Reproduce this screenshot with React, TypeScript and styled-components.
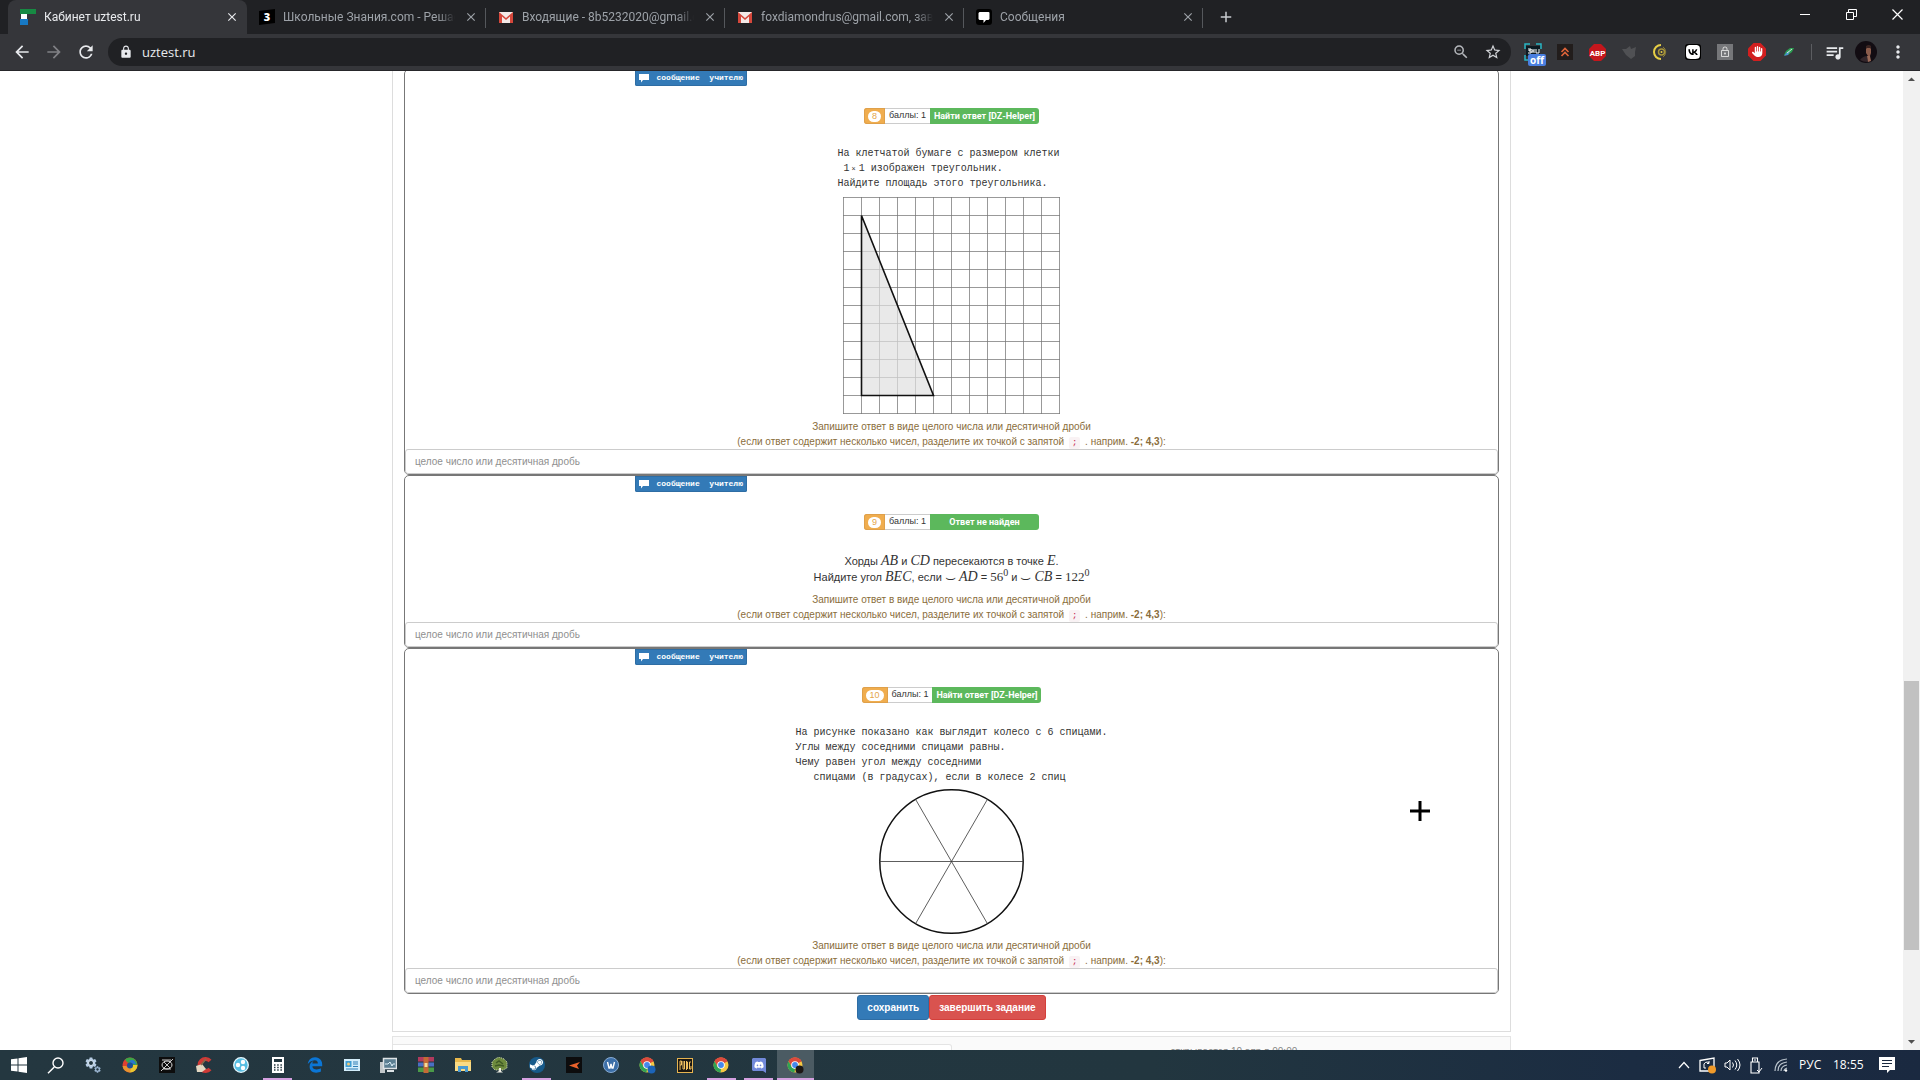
import React from "react";
import styled, { createGlobalStyle } from "styled-components";
import {
  MdArrowBack,
  MdArrowForward,
  MdRefresh,
  MdLock,
  MdStarBorder,
  MdZoomOut,
  MdQueueMusic,
  MdMoreVert,
  MdClose,
  MdAdd,
  MdArrowDropUp,
  MdArrowDropDown,
  MdSettings,
  MdLockOutline,
} from "react-icons/md";
import { FaVk, FaDiscord, FaSteamSymbol, FaEdgeLegacy, FaHand } from "react-icons/fa6";

const ui = `"Open Sans", "Noto Sans", sans-serif`;
const roboto = `Roboto, "Open Sans", sans-serif`;
const arial = `"Liberation Sans", Arial, sans-serif`;
const mono = `"Liberation Mono", "Courier New", monospace`;

const GlobalStyle = createGlobalStyle`
  *, *::before, *::after { box-sizing: border-box; }
  body { margin: 0; overflow: hidden; }
  button { border: 0; padding: 0; background: none; font: inherit; color: inherit; }
`;

/* ---------- window frame ---------- */

const Screen = styled.div`
  display: flex;
  flex-direction: column;
  height: 100vh;
  background: #fff;
  font-family: ${arial};
  font-size: 10px;
  color: #333;
`;

const TabStrip = styled.header`
  display: flex;
  flex: none;
  height: 34px;
  padding-left: 8px;
  background: #202124;
  font-family: ${roboto};
  font-size: 12px;
`;

const Tab = styled.div<{ $active?: boolean; $divided?: boolean }>`
  display: flex;
  align-items: center;
  gap: 8px;
  flex: 0 1 239px;
  min-width: 0;
  padding: 0 7px 0 12px;
  position: relative;
  color: ${(p) => (p.$active ? "#e8eaed" : "#9da2a8")};
  background: ${(p) => (p.$active ? "#35363a" : "transparent")};
  border-radius: 8px 8px 0 0;
  &::after {
    content: "";
    position: absolute;
    right: 0;
    top: 8px;
    width: 1px;
    height: 20px;
    background: ${(p) => (p.$divided ? "#55585c" : "transparent")};
  }
  svg {
    flex: none;
  }
`;

const TabTitle = styled.a`
  flex: 1;
  min-width: 0;
  overflow: hidden;
  white-space: nowrap;
  color: inherit;
  text-decoration: none;
  line-height: 16px;
  mask-image: linear-gradient(90deg, #000 90%, transparent);
`;

const IconButton = styled.button<{ $w: number; $color?: string }>`
  display: flex;
  align-items: center;
  justify-content: center;
  flex: none;
  width: ${(p) => p.$w}px;
  color: ${(p) => p.$color ?? "inherit"};
`;

const NewTab = styled(IconButton)`
  margin-left: 9px;
  color: #c8cbcf;
`;

const WindowControls = styled.div`
  display: flex;
  height: 28px;
  margin-left: auto;
  color: #fff;
`;

const Toolbar = styled.div`
  display: flex;
  align-items: center;
  flex: none;
  height: 37px;
  padding: 0 6px;
  background: #35363a;
  border-bottom: 1px solid #26262a;
  color: #e8eaed;
`;

const AddressBar = styled.div`
  display: flex;
  align-items: center;
  flex: 1;
  height: 28px;
  margin: 0 6px;
  padding: 0 2px 0 11px;
  border-radius: 14px;
  background: #202124;
  font-family: ${ui};
`;

const AddressInput = styled.input`
  flex: 1;
  min-width: 0;
  margin-left: 9px;
  padding: 0;
  border: 0;
  outline: 0;
  background: none;
  color: #e8eaed;
  font: 13px/20px ${ui};
`;

const Extensions = styled.div`
  display: flex;
  align-items: center;
`;

const Separator = styled.span`
  width: 1px;
  height: 16px;
  margin: 0 6px;
  background: #5c5d61;
`;

const OffIcon = styled.span`
  position: relative;
  width: 18px;
  height: 18px;
`;

const OffBadge = styled.span`
  position: absolute;
  left: 4px;
  top: 11px;
  padding: 0 2px;
  border-radius: 2px;
  background: #4a7fe0;
  color: #fff;
  font: bold 10px/12px ${ui};
`;

/* ---------- page ---------- */

const Viewport = styled.div`
  display: flex;
  flex: 1;
  min-height: 0;
  overflow: hidden;
  position: relative;
`;

const Page = styled.main`
  flex: 1;
  min-width: 0;
`;

const Panel = styled.section`
  max-width: 1119px;
  margin: -2px auto 4px;
  padding: 0 11px 11px;
  border: 1px solid #ddd;
  border-top: 0;
`;

const Card = styled.article`
  border: 1px solid #777;
  border-radius: 5px;
  text-align: center;
`;

const MessageButton = styled.button`
  display: flex;
  align-items: center;
  gap: 8px;
  height: 16px;
  margin-left: 21%;
  padding: 0 4px;
  border-radius: 0 0 2px 2px;
  background: #337ab7;
  box-shadow: inset 0 0 0 1px #2e6da4;
  color: #fff;
  font: bold 8px/16px ${mono};
  white-space: pre;
`;

const BadgeRow = styled.div`
  display: flex;
  justify-content: center;
  height: 16px;
  margin: 22px 0;
  font-size: 9px;
  line-height: 13px;
`;

const NumberBadge = styled.span`
  display: flex;
  align-items: center;
  padding: 0 4px;
  border-radius: 3px 0 0 3px;
  background: #f0ad4e;
  box-shadow: inset 0 0 0 1px #dfa04a;
`;

const NumberPill = styled.span`
  padding: 0 4px;
  border-radius: 6px;
  background: #fff;
  color: #e5a54b;
  line-height: 11px;
`;

const Points = styled.span`
  padding: 0 4px;
  border: 1px solid #ccc;
  border-width: 1px 0;
`;

const AnswerButton = styled.button`
  min-width: 109px;
  padding: 0 4px;
  border-radius: 0 3px 3px 0;
  background: #5cb85c;
  color: #fff;
  font: bold 9px/13px ${roboto};
`;

const MonoText = styled.div`
  display: inline-block;
  vertical-align: top;
  text-align: left;
  white-space: pre;
  font: 10px/15px ${mono};
`;

const MonoLine = styled.div`
  height: 15px;
`;

const Times = styled.span`
  padding: 0 3px 0 2px;
  font-size: 7px;
  line-height: 1;
`;

const Statement = styled.p`
  margin: 0 0 7px;
  padding-top: 1px;
  font-size: 11px;
  line-height: 16px;
  white-space: nowrap;
  var {
    font: italic 14px/1 "Liberation Serif", serif;
  }
  b {
    font: 13px/1 "Liberation Serif", serif;
  }
  sup {
    font: 10px/0 "Liberation Serif", serif;
    vertical-align: 5px;
  }
`;

const Arc = styled.span`
  font: 17px/0 "DejaVu Sans", sans-serif;
  vertical-align: -2px;
`;

const Figure = styled.svg`
  display: block;
  margin: 4px auto;
`;

const Hint = styled.label`
  display: block;
  color: #8a6d3b;
  line-height: 15px;
  code {
    margin: 0 2px;
    padding: 1px 3px;
    border-radius: 2px;
    background: #f9f2f4;
    color: #c7254e;
    font: 9px/11px ${mono};
  }
`;

const AnswerInput = styled.input`
  display: block;
  width: 100%;
  height: 25px;
  padding: 0 9px 1px;
  border: 1px solid #ccc;
  border-radius: 3px;
  outline: 0;
  background: #fff;
  color: #555;
  font: 10px/15px ${arial};
  &::placeholder {
    color: #8f8f8f;
    opacity: 1;
  }
`;

const Actions = styled.div`
  display: flex;
  justify-content: center;
  padding-top: 1px;
`;

const ActionButton = styled.button<{ $bg: string; $edge: string }>`
  height: 25px;
  padding: 0 9px;
  border: 1px solid ${(p) => p.$edge};
  border-radius: 3px;
  background: ${(p) => p.$bg};
  color: #fff;
  font: bold 10px/15px ${arial};
`;

const NextPanel = styled.section`
  display: grid;
  grid-template-columns: 1fr 1fr;
  max-width: 1119px;
  margin: 0 auto;
  padding-top: 7px;
  border: 1px solid #e4e4e4;
  background: #fafafa;
  color: #888;
  text-align: center;
  line-height: 15px;
`;

const NextBox = styled.div`
  height: 40px;
  border: 1px solid #e4e4e4;
  border-left: 0;
  border-radius: 0 3px 0 0;
  background: #fff;
`;

const NextDate = styled.span`
  padding-left: 6px;
`;

const ScrollTrack = styled.aside`
  display: flex;
  flex-direction: column;
  align-items: center;
  width: 17px;
  background: #f1f1f1;
  color: #505050;
`;

const ScrollThumb = styled.div`
  width: 15px;
  flex: 269 0 0;
  background: #c1c1c1;
`;

const ScrollSpace = styled.div<{ $part: number }>`
  flex: ${(p) => p.$part} 0 0;
`;

const Cursor = styled.svg`
  position: absolute;
  left: 1410px;
  top: 730px;
`;

/* ---------- taskbar ---------- */

const Taskbar = styled.footer`
  display: flex;
  align-items: center;
  flex: none;
  height: 30px;
  background: linear-gradient(90deg, #243740 0%, #22363f 60%, #1b2c42 85%, #1a2940 100%);
  color: #fff;
  font: 12px/16px ${ui};
`;

const TaskItem = styled.button<{ $running?: boolean; $active?: boolean }>`
  display: flex;
  align-items: center;
  justify-content: center;
  width: 37px;
  height: 30px;
  position: relative;
  background: ${(p) => (p.$active ? "#4b5b63" : "transparent")};
  &::after {
    content: "";
    position: absolute;
    left: ${(p) => (p.$active ? 0 : 4)}px;
    right: ${(p) => (p.$active ? 0 : 4)}px;
    bottom: 0;
    height: 2px;
    background: ${(p) => (p.$running ? "#d4a0e0" : "transparent")};
  }
`;

const Tray = styled.div`
  display: flex;
  align-items: center;
  margin-left: auto;
  padding-right: 21px;
`;

const Lang = styled.span`
  width: 26px;
  margin-left: 5px;
`;

const Clock = styled.time`
  width: 42px;
  margin-left: 8px;
`;

/* ---------- drawings ---------- */

const Gmail = () => (
  <svg width="16" height="16" viewBox="0 0 16 16">
    <rect x="1" y="3" width="14" height="11" fill="#f3e9e7" />
    <path d="M1 14V3l7 6 7-6v11h-3V7.500L8 11 4 7.500V14z" fill="#d5473b" />
  </svg>
);

const UzIcon = () => (
  <svg width="16" height="16" viewBox="0 0 16 16">
    <path d="M0 0h16v5H8v0H0z" fill="#178a43" />
    <path d="M1 5h6v5H1z" fill="#fff" />
    <path d="M0 10h8v6H0z" fill="#1779c4" />
  </svg>
);

const ZnaniyaIcon = () => (
  <svg width="16" height="16" viewBox="0 0 16 16">
    <path d="M0 2l16-2v14L0 16z" fill="#000" />
    <text x="8" y="12" textAnchor="middle" fontFamily="Open Sans" fontWeight="800" fontSize="11" fill="#fff">
      3
    </text>
  </svg>
);

const MessagesIcon = () => (
  <svg width="16" height="16" viewBox="0 0 16 16">
    <rect width="16" height="16" rx="3" fill="#000" />
    <path d="M3.500 3h9a1 1 0 011 1v6l-1 1H10l-2.500 3v-3h-4l-1-1V4z" fill="#fff" />
  </svg>
);

const Bubble = () => (
  <svg width="10" height="10" viewBox="0 0 10 10">
    <path d="M0 1h10v6H4L2 9.500V7H0z" fill="#fff" />
  </svg>
);

const Chrome = ({ dot }: { dot?: string }) => (
  <svg width="17" height="17" viewBox="0 0 17 17">
    <circle cx="8" cy="8" r="7.500" fill="#f6c843" />
    <path d="M8 8L1.500 4.250A7.500 7.500 0 0114.500 4.250z" fill="#dc4a3d" />
    <path d="M8 .5a7.500 7.500 0 016.500 3.750H8L4.750 9.900 1.500 4.250A7.500 7.500 0 018 .5z" fill="#dc4a3d" />
    <path d="M1.500 4.250L4.750 9.900 8 11.700 7.500 15.500A7.500 7.500 0 011.500 4.250z" fill="#2fa354" />
    <circle cx="8" cy="8" r="3.800" fill="#fff" />
    <circle cx="8" cy="8" r="2.900" fill="#4688ec" />
    {dot && <circle cx="12.500" cy="12.500" r="4" fill={dot} />}
  </svg>
);

const OffDrawing = () => (
  <svg width="18" height="18" viewBox="0 0 18 18">
    <path d="M1 6V1h5M12 1h5v5M1 12v5h3" fill="none" stroke="#27b5c4" strokeWidth="1.500" />
    <rect x="2" y="3" width="14" height="10" fill="#0b1a22" />
    <path d="M4 6h3v1H5v1h2v2H4M8 6v4M10 6v4M8 8h2M12 6v4h3M15 6v4" fill="none" stroke="#fff" />
  </svg>
);

const Chevrons = () => (
  <svg width="16" height="16" viewBox="0 0 16 16">
    <rect width="16" height="16" fill="#221d1c" />
    <path d="M4.500 8L8 4.500 11.500 8M4.500 12L8 8.500l3.500 3.500" fill="none" stroke="#e0643a" strokeWidth="1.600" />
  </svg>
);

const Abp = () => (
  <svg width="17" height="17" viewBox="0 0 17 17">
    <path d="M5 0h7l5 5v7l-5 5H5l-5-5V5z" fill="#c4161c" />
    <text x="8.500" y="11.500" textAnchor="middle" fontFamily="Roboto" fontWeight="700" fontSize="8" fill="#fff">
      ABP
    </text>
  </svg>
);

const Fox = () => (
  <svg width="16" height="16" viewBox="0 0 16 16">
    <path d="M1 5l4 0 4-3 1 3 5-2-1 5v4l-4 3-5-4z" fill="#505154" />
  </svg>
);

const Coin = () => (
  <svg width="16" height="16" viewBox="0 0 16 16">
    <path d="M8 1a7 7 0 000 14" fill="none" stroke="#e7cf45" strokeWidth="2" />
    <circle cx="8.500" cy="8" r="3" fill="none" stroke="#a8953a" strokeWidth="1.500" />
    <circle cx="8.500" cy="8" r="1" fill="#e7cf45" />
    <path d="M10 3a6 6 0 010 10" fill="none" stroke="#8f8038" />
  </svg>
);

const Vk = () => (
  <svg width="16" height="16" viewBox="0 0 16 16">
    <rect width="16" height="16" rx="3" fill="#000" />
    <FaVk x="0" y="0" size={16} color="#fff" />
  </svg>
);

const GreyLock = () => (
  <svg width="16" height="16" viewBox="0 0 16 16">
    <rect width="16" height="16" fill="#76777a" />
    <MdLockOutline x="2" y="2" size={12} color="#d8d8d8" />
  </svg>
);

const StopHand = () => (
  <svg width="18" height="18" viewBox="0 0 18 18">
    <path d="M5.500 0h7L18 5.500v7L12.500 18h-7L0 12.500v-7z" fill="#d21f1f" />
    <FaHand x="4" y="3" size={11} color="#fff" />
  </svg>
);

const Feather = () => (
  <svg width="16" height="16" viewBox="0 0 16 16">
    <path d="M3 11l2-4 4-3 4 0-2 4-4 3z" fill="#2c9d52" />
    <path d="M3 12l3-4 3-1-2 4z" fill="#4a93cf" />
    <path d="M6 9l5-4" stroke="#d6ecd8" />
  </svg>
);

const Avatar = () => (
  <svg width="22" height="22" viewBox="0 0 22 22">
    <circle cx="11" cy="11" r="11" fill="#120c12" />
    <path d="M11 7q3-2 5 0v5l-1 3h-2l-2-3z" fill="#8a5b4b" />
    <path d="M11 8V5q3-2 5 0v3l-1-1h-3z" fill="#3a2422" />
    <path d="M5 19q3-4 7-4l1 6q-5 0-8-2z" fill="#33262b" />
    <path d="M12 15h3l1 5-3 1z" fill="#9a6a58" />
  </svg>
);

const WindowsLogo = () => (
  <svg width="16" height="16" viewBox="0 0 16 16">
    <path d="M0 2.300L6.500 1.400v6H0zM7.500 1.300L16 0v7.400H7.500zM0 8.500h6.500v6L0 13.700zM7.500 8.500H16V16l-8.500-1.200z" fill="#fff" />
  </svg>
);

const SearchGlass = () => (
  <svg width="17" height="17" viewBox="0 0 17 17">
    <path d="M7.300 10L1 16.200" stroke="#fff" strokeWidth="1.500" />
    <circle cx="11" cy="6" r="5" fill="none" stroke="#fff" strokeWidth="1.400" />
  </svg>
);

const Gears = () => (
  <svg width="16" height="16" viewBox="0 0 16 16">
    <MdSettings x="-1" y="-1" size={14} color="#b9cfe6" />
    <circle cx="6" cy="6" r="2.500" fill="#22363f" stroke="#dce8f4" />
    <MdSettings x="8.500" y="8.500" size={8} color="#9db8d4" />
  </svg>
);

const Swirl = () => (
  <svg width="16" height="16" viewBox="0 0 16 16">
    <circle cx="8" cy="8" r="7.500" fill="#e0402f" />
    <path d="M8 .5A7.500 7.500 0 0115.500 8L11 9 5 5 3 2.500Q5 .6 8 .5z" fill="#3aa648" />
    <path d="M15.500 8A7.500 7.500 0 018 15.500L6 12l5-4z" fill="#e8c72f" />
    <path d="M8 15.500A7.500 7.500 0 01.5 9L4 9l5 3z" fill="#e8922f" />
    <path d="M7 4q6-3 7 4-2-2-4-1z" fill="#2976cf" />
    <circle cx="8" cy="8.500" r="3" fill="#1d4f9b" />
  </svg>
);

const DarkGlyph = () => (
  <svg width="16" height="16" viewBox="0 0 16 16">
    <rect width="16" height="16" fill="#0d0d0d" />
    <ellipse cx="8" cy="8" rx="5" ry="4" fill="none" stroke="#ddd" />
    <path d="M2 14L14 2M3 3h9M5 5l6 6M4 12h8" stroke="#ddd" strokeWidth=".9" />
  </svg>
);

const CCleaner = () => (
  <svg width="16" height="16" viewBox="0 0 16 16">
    <path d="M14 4A6 6 0 1014 12" fill="none" stroke="#cf3a36" strokeWidth="4" />
    <path d="M0 9l6-2 4 5-4 3H1z" fill="#e3d8c2" />
    <path d="M5 8l5-6" stroke="#8a6a4c" strokeWidth="1.500" />
  </svg>
);

const Bowl = () => (
  <svg width="16" height="16" viewBox="0 0 16 16">
    <circle cx="8" cy="8" r="7.300" fill="#58bfe3" stroke="#e6f7fd" strokeWidth="1.300" />
    <circle cx="5" cy="8" r="2.200" fill="#fff" />
    <circle cx="10" cy="5" r="2.200" fill="#fff" />
    <circle cx="10" cy="11" r="2.200" fill="#fff" />
  </svg>
);

const Calculator = () => (
  <svg width="12" height="16" viewBox="0 0 12 16">
    <rect width="12" height="16" fill="#fff" />
    <path d="M2 2h8v3H2z" fill="#22363f" />
    <path d="M2 8h8M2 10.500h8M2 13h8" stroke="#22363f" strokeWidth="1.500" strokeDasharray="1.500 1.700" />
  </svg>
);

const CardIcon = () => (
  <svg width="16" height="12" viewBox="0 0 16 12">
    <rect width="16" height="12" fill="#d4eefb" />
    <rect x="1.500" y="2" width="6" height="6" fill="#3f9ed4" />
    <path d="M9 3h5M9 5h5M2 10h12M9 7.500h5" stroke="#2e7fb5" />
    <circle cx="4.500" cy="5" r="1.500" fill="#f0c878" />
  </svg>
);

const Monitor = () => (
  <svg width="17" height="16" viewBox="0 0 17 16">
    <rect x="0" y="5" width="5" height="11" fill="#c2c8ca" />
    <rect x="3.500" y="1.500" width="13" height="10" fill="#5b7f92" stroke="#dde3e6" strokeWidth="1.500" />
    <path d="M5 7h3l2-2 2 4 1-2h2" fill="none" stroke="#dff2fa" />
    <path d="M7 14h7" stroke="#dde3e6" strokeWidth="2" />
  </svg>
);

const Rar = () => (
  <svg width="16" height="16" viewBox="0 0 16 16">
    <rect width="16" height="5" fill="#b13a5e" />
    <rect y="5" width="16" height="5" fill="#4a6fc4" />
    <rect y="10" width="16" height="5" fill="#4a9a48" />
    <path d="M0 5h16M0 10h16" stroke="#22363f" />
    <rect x="5.500" width="5" height="16" fill="#c46a35" />
    <rect x="6.500" y="6" width="3" height="4" fill="#f3dc9a" />
  </svg>
);

const Folder = () => (
  <svg width="16" height="14" viewBox="0 0 16 14">
    <path d="M0 0h6l1 2h9v11H0z" fill="#e9b94c" />
    <path d="M0 4h16v9H0z" fill="#fadb84" />
    <path d="M3 14V8h10v6h-3v-3H6v3z" fill="#4a9bd1" />
  </svg>
);

const Tree = () => (
  <svg width="17" height="16" viewBox="0 0 17 16">
    <path d="M1 10V5l3-3 4-2 5 2 3 3v6l-4 2H4z" fill="#6d8a3d" stroke="#d2dcb8" strokeDasharray="1 1" />
    <path d="M5 6l3-2 4 3M4 9l4-1 5 1" fill="none" stroke="#3f5a25" strokeWidth="1.500" />
    <path d="M8 11h2v3l2 1.500H5L8 14z" fill="#f0efe6" />
  </svg>
);

const Steam = () => (
  <svg width="16" height="16" viewBox="0 0 16 16">
    <circle cx="8" cy="8" r="8" fill="#175a8a" />
    <FaSteamSymbol x="0" y="0" size={15} color="#fff" />
  </svg>
);

const BlackOrange = () => (
  <svg width="16" height="16" viewBox="0 0 16 16">
    <rect width="16" height="16" fill="#0c0c0d" />
    <path d="M3 8.500L14 5l-3 3.500L13 12z" fill="#e8622c" />
  </svg>
);

const RoundW = () => (
  <svg width="16" height="16" viewBox="0 0 16 16">
    <circle cx="8" cy="8" r="7.500" fill="#3c6fa8" stroke="#88abd2" />
    <path d="M4.500 5l1.500 6h1l1-4 1 4h1l1.500-6" fill="none" stroke="#fff" strokeWidth="1.400" />
  </svg>
);

const Pubg = () => (
  <svg width="16" height="15" viewBox="0 0 16 15">
    <rect x=".5" y=".5" width="15" height="14" fill="#1a1712" stroke="#e6b450" />
    <path d="M3 12V3h1.500v4H3M6 3v8h1.500V3M9.500 3v9M9.500 4h1v7M14 4h-1.500v7H14V8" fill="none" stroke="#f0c060" />
  </svg>
);

const DiscordIcon = () => (
  <svg width="14" height="15" viewBox="0 0 14 15">
    <path d="M1 0h12l1 1v14l-3-2H1l-1-1V1z" fill="#7289da" />
    <FaDiscord x="2" y="2" size={10} color="#fff" />
  </svg>
);

const TrayCaret = () => (
  <svg width="12" height="8" viewBox="0 0 12 8">
    <path d="M1 7l5-5.500L11 7" fill="none" stroke="#fff" strokeWidth="1.200" />
  </svg>
);

const TrayUpdate = () => (
  <svg width="18" height="17" viewBox="0 0 18 17">
    <path d="M1 3.500L15 1v13L1 14z" fill="none" stroke="#fff" strokeWidth="1.300" />
    <path d="M5 9a3 3 0 015-3M10 4v2.500H8M5 9v2h2" fill="none" stroke="#fff" />
    <circle cx="13" cy="12.500" r="4" fill="#f09a2a" />
  </svg>
);

const TrayVolume = () => (
  <svg width="17" height="16" viewBox="0 0 17 16">
    <path d="M1 6h2l3-3v10l-3-3H1z" fill="none" stroke="#fff" />
    <path d="M8.500 5.500q2 2.500 0 5M11 3.500q3.500 4.500 0 9M13.500 2q5 6 0 12" fill="none" stroke="#fff" />
  </svg>
);

const TrayUsb = () => (
  <svg width="14" height="17" viewBox="0 0 14 17">
    <path d="M3.500 5V1h5v4M2 5h8v11H2z" fill="none" stroke="#fff" strokeWidth="1.100" />
    <path d="M5 3h2M8 13l2 2 3-4" fill="none" stroke="#fff" />
  </svg>
);

const TrayWifi = () => (
  <svg width="14" height="14" viewBox="0 0 14 14">
    <g fill="none" stroke="#b9c3cc" strokeWidth="1.200">
      <path d="M1 13Q1 2 13 1M4 13q0-8 9-9M7 13q0-5 6-6M10 13q0-2 3-3" />
    </g>
    <circle cx="12" cy="12.500" r="1.200" fill="#fff" />
  </svg>
);

const TrayNotes = () => (
  <svg width="16" height="16" viewBox="0 0 16 16">
    <path d="M0 0h16v13h-5l-3 3v-3H0z" fill="#fff" />
    <path d="M3 3.500h10M3 6.500h10M3 9.500h7" stroke="#1b2a40" strokeWidth="1.200" />
  </svg>
);

/* ---------- data ---------- */

const tabs = [
  { title: "Кабинет uztest.ru", icon: <UzIcon />, active: true },
  { title: "Школьные Знания.com - Решае", icon: <ZnaniyaIcon />, divided: true },
  { title: "Входящие - 8b5232020@gmail.c", icon: <Gmail />, divided: true },
  { title: "foxdiamondrus@gmail.com, заве", icon: <Gmail />, divided: true },
  { title: "Сообщения", icon: <MessagesIcon />, divided: true },
];

const extensions: [string, React.ReactNode][] = [
  ["Chevrons", <Chevrons />],
  ["Adblock Plus", <Abp />],
  ["Fox", <Fox />],
  ["Coin", <Coin />],
  ["VK", <Vk />],
  ["Lock", <GreyLock />],
  ["Blocker", <StopHand />],
  ["Feather", <Feather />],
];

const apps: { name: string; icon: React.ReactNode; running?: boolean; active?: boolean }[] = [
  { name: "Start", icon: <WindowsLogo /> },
  { name: "Search", icon: <SearchGlass /> },
  { name: "Settings", icon: <Gears /> },
  { name: "Browser", icon: <Swirl /> },
  { name: "Game", icon: <DarkGlyph /> },
  { name: "CCleaner", icon: <CCleaner /> },
  { name: "Hamachi", icon: <Bowl /> },
  { name: "Calculator", icon: <Calculator />, running: true },
  { name: "Edge", icon: <FaEdgeLegacy size={16} color="#0b76d6" /> },
  { name: "Panel", icon: <CardIcon /> },
  { name: "Monitor", icon: <Monitor /> },
  { name: "WinRAR", icon: <Rar /> },
  { name: "Explorer", icon: <Folder /> },
  { name: "Tree", icon: <Tree /> },
  { name: "Steam", icon: <Steam />, running: true },
  { name: "Launcher", icon: <BlackOrange /> },
  { name: "Wallpaper", icon: <RoundW /> },
  { name: "Chrome profile", icon: <Chrome dot="#1c64b8" /> },
  { name: "PUBG", icon: <Pubg /> },
  { name: "Chrome", icon: <Chrome />, running: true },
  { name: "Discord", icon: <DiscordIcon />, running: true },
  { name: "Chrome window", icon: <Chrome dot="#1d1715" />, running: true, active: true },
];

/* ---------- tasks ---------- */

const GridFigure = () => (
  <Figure width="218" height="220" viewBox="0 0 218 220">
    <g stroke="#777" strokeOpacity=".75" strokeWidth="1">
      {Array.from({ length: 13 }, (_, i) => (
        <path key={i} d={`M${0.5 + i * 18} 2v217M0 ${2.5 + i * 18}h217`} />
      ))}
    </g>
    <path d="M18.500 20.500v180h72z" fill="#e0e0e0" fillOpacity=".7" stroke="#111" strokeWidth="1.600" />
  </Figure>
);

const WheelFigure = () => (
  <Figure width="145" height="145" viewBox="0 0 145 145">
    <circle cx="72.500" cy="72.500" r="71.700" fill="none" stroke="#111" strokeWidth="1.500" />
    <path d="M0 72.500h145M36.600 10.400l71.800 124.200M108.400 10.400L36.600 134.600" stroke="#333" strokeWidth=".8" />
  </Figure>
);

const Task = ({ n, answer, children }: { n: number; answer: string; children: React.ReactNode }) => (
  <Card>
    <MessageButton type="button">
      <Bubble />
      {"сообщение  учителю"}
    </MessageButton>
    <BadgeRow>
      <NumberBadge>
        <NumberPill>{n}</NumberPill>
      </NumberBadge>
      <Points>баллы: 1</Points>
      <AnswerButton type="button">{answer}</AnswerButton>
    </BadgeRow>
    {children}
    <Hint htmlFor={`answer-${n}`}>
      Запишите ответ в виде целого числа или десятичной дроби
      <br />
      (если ответ содержит несколько чисел, разделите их точкой с запятой <code>;</code> . наприм.{" "}
      <strong>-2; 4,3</strong>):
    </Hint>
    <AnswerInput id={`answer-${n}`} placeholder="целое число или десятичная дробь" />
  </Card>
);

export default function App() {
  return (
    <Screen>
      <GlobalStyle />
      <TabStrip>
        {tabs.map((t) => (
          <Tab key={t.title} $active={t.active} $divided={t.divided}>
            {t.icon}
            <TabTitle href="#">{t.title}</TabTitle>
            <IconButton $w={16} aria-label="Close tab">
              <MdClose size={14} />
            </IconButton>
          </Tab>
        ))}
        <NewTab $w={28} aria-label="New tab">
          <MdAdd size={18} />
        </NewTab>
        <WindowControls>
          <IconButton $w={46} aria-label="Minimize">
            <svg width="10" height="10">
              <path d="M0 5.500h10" stroke="#fff" />
            </svg>
          </IconButton>
          <IconButton $w={46} aria-label="Restore">
            <svg width="11" height="11">
              <path d="M.5 3.500h7v7h-7zM2.500 3V.5h8v7H8" fill="none" stroke="#fff" />
            </svg>
          </IconButton>
          <IconButton $w={46} aria-label="Close">
            <svg width="11" height="11">
              <path d="M.5.5l10 10M10.500.5l-10 10" stroke="#fff" strokeWidth="1.200" />
            </svg>
          </IconButton>
        </WindowControls>
      </TabStrip>

      <Toolbar>
        <IconButton $w={32} aria-label="Back">
          <MdArrowBack size={20} />
        </IconButton>
        <IconButton $w={32} $color="#808185" aria-label="Forward">
          <MdArrowForward size={20} />
        </IconButton>
        <IconButton $w={32} aria-label="Reload">
          <MdRefresh size={20} />
        </IconButton>
        <AddressBar>
          <MdLock size={14} />
          <AddressInput aria-label="Address" defaultValue="uztest.ru" />
          <IconButton $w={32} $color="#b4b7bb" aria-label="Zoom">
            <MdZoomOut size={18} />
          </IconButton>
          <IconButton $w={32} $color="#d2d4d8" aria-label="Bookmark">
            <MdStarBorder size={18} />
          </IconButton>
        </AddressBar>
        <Extensions>
          <IconButton $w={32} aria-label="Helper">
            <OffIcon>
              <OffDrawing />
              <OffBadge>off</OffBadge>
            </OffIcon>
          </IconButton>
          {extensions.map(([name, icon]) => (
            <IconButton key={name} $w={32} aria-label={name}>
              {icon}
            </IconButton>
          ))}
          <Separator />
          <IconButton $w={32} aria-label="Media">
            <MdQueueMusic size={21} />
          </IconButton>
          <IconButton $w={32} aria-label="Profile">
            <Avatar />
          </IconButton>
          <IconButton $w={32} aria-label="Menu">
            <MdMoreVert size={20} />
          </IconButton>
        </Extensions>
      </Toolbar>

      <Viewport>
        <Page>
          <Panel>
            <Task n={8} answer="Найти ответ [DZ-Helper]">
              <MonoText>
                <MonoLine>{"На клетчатой бумаге с размером клетки "}</MonoLine>
                <MonoLine>
                  {" 1"}
                  <Times>×</Times>
                  {"1 изображен треугольник."}
                </MonoLine>
                <MonoLine>Найдите площадь этого треугольника.</MonoLine>
              </MonoText>
              <GridFigure />
            </Task>
            <Task n={9} answer="Ответ не найден">
              <Statement>
                Хорды <var>AB</var> и <var>CD</var> пересекаются в точке <var>E</var>.<br />
                Найдите угол <var>BEC</var>, если <Arc>⌣</Arc> <var>AD</var> = <b>56</b>
                <sup>0</sup> и <Arc>⌣</Arc> <var>CB</var> = <b>122</b>
                <sup>0</sup>
              </Statement>
            </Task>
            <Task n={10} answer="Найти ответ [DZ-Helper]">
              <MonoText>
                <MonoLine>На рисунке показано как выглядит колесо с 6 спицами.</MonoLine>
                <MonoLine>Углы между соседними спицами равны.</MonoLine>
                <MonoLine>Чему равен угол между соседними</MonoLine>
                <MonoLine>{"   спицами (в градусах), если в колесе 2 спиц"}</MonoLine>
              </MonoText>
              <WheelFigure />
            </Task>
            <Actions>
              <ActionButton type="button" $bg="#337ab7" $edge="#2e6da4">
                сохранить
              </ActionButton>
              <ActionButton type="button" $bg="#d9534f" $edge="#d43f3a">
                завершить задание
              </ActionButton>
            </Actions>
          </Panel>
          <NextPanel>
            <NextBox />
            <NextDate>открывается 10 апр в 00:00</NextDate>
          </NextPanel>
        </Page>
        <ScrollTrack>
          <MdArrowDropUp size={17} />
          <ScrollSpace $part={593} />
          <ScrollThumb />
          <ScrollSpace $part={83} />
          <MdArrowDropDown size={17} />
        </ScrollTrack>
        <Cursor width="20" height="20" viewBox="0 0 20 20">
          <path d="M10 0v20M0 10h20" stroke="#000" strokeWidth="3" />
        </Cursor>
      </Viewport>

      <Taskbar>
        {apps.map((a) => (
          <TaskItem key={a.name} aria-label={a.name} $running={a.running} $active={a.active}>
            {a.icon}
          </TaskItem>
        ))}
        <Tray>
          <IconButton $w={24} aria-label="Hidden icons">
            <TrayCaret />
          </IconButton>
          <IconButton $w={24} aria-label="Update">
            <TrayUpdate />
          </IconButton>
          <IconButton $w={24} aria-label="Volume">
            <TrayVolume />
          </IconButton>
          <IconButton $w={24} aria-label="USB">
            <TrayUsb />
          </IconButton>
          <IconButton $w={26} aria-label="Network">
            <TrayWifi />
          </IconButton>
          <Lang>РУС</Lang>
          <Clock>18:55</Clock>
          <IconButton $w={24} aria-label="Notifications">
            <TrayNotes />
          </IconButton>
        </Tray>
      </Taskbar>
    </Screen>
  );
}
